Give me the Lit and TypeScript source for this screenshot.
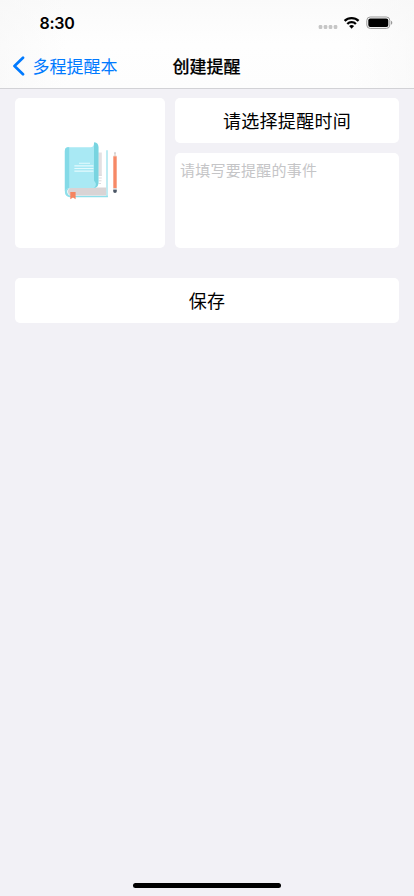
import { LitElement, html, css } from "lit";
import { customElement } from "lit/decorators.js";

@customElement("status-bar")
class StatusBar extends LitElement {
  static styles = css`
    :host {
      display: flex;
      justify-content: space-between;
      height: 44px;
      padding: 0 21px 0 39.5px;
      box-sizing: border-box;
    }
    .time {
      font: 600 16px/20px Inter, sans-serif;
      letter-spacing: -0.25px;
      margin-top: 13px;
      color: #000;
    }
    .icons {
      display: block;
      margin-top: 12px;
    }
  `;
  render() {
    return html`
      <span class="time">8:30</span>
      <svg class="icons" width="77" height="22" viewBox="316 12 77 22">
        <g fill="#c6c6c6">
          <rect x="318.7" y="25.1" width="3.6" height="3.8" rx="1.2" />
          <rect x="323.7" y="25.1" width="3.6" height="3.8" rx="1.2" />
          <rect x="328.7" y="25.1" width="3.6" height="3.8" rx="1.2" />
          <rect x="333.7" y="25.1" width="3.6" height="3.8" rx="1.2" />
        </g>
        <g fill="none" stroke="#000" stroke-width="2.3">
          <path d="M344.6 20.9a10.1 10.1 0 0 1 14 0" />
          <path d="M347.3 24a6 6 0 0 1 8.6 0" />
        </g>
        <path d="M349.1 26.1a3.6 3.6 0 0 1 5 0l-2.5 2.6z" fill="#000" />
        <rect x="366.8" y="17" width="23" height="11.4" rx="3.4" fill="none" stroke="#999" />
        <rect x="368.3" y="18.6" width="20" height="8.3" rx="1.9" fill="#000" />
        <path d="M391 20.8c1.8.7 1.8 3.3 0 4z" fill="#999" />
      </svg>
    `;
  }
}

@customElement("nav-bar")
class NavBar extends LitElement {
  static styles = css`
    :host {
      display: grid;
      grid-template-columns: 1fr auto 1fr;
      align-items: center;
      height: 44px;
      font: 17px/24px "Noto Sans CJK SC", sans-serif;
    }
    .back {
      display: flex;
      align-items: center;
      gap: 7.5px;
      padding-left: 12px;
      color: #007aff;
      white-space: nowrap;
    }
    .title {
      font-weight: 500;
      color: #000;
      -webkit-text-stroke: 0.2px #000;
      margin-right: 1px;
    }
  `;
  render() {
    return html`
      <div class="back">
        <svg width="13" height="20" viewBox="0 0 13 20">
          <path d="M11 1.8 2.5 10l8.5 8.2" fill="none" stroke="#007aff" stroke-width="2.7" stroke-linecap="round" stroke-linejoin="round" />
        </svg>
        <span>多程提醒本</span>
      </div>
      <div class="title">创建提醒</div>
    `;
  }
}

@customElement("notebook-icon")
class NotebookIcon extends LitElement {
  static styles = css`
    :host {
      display: block;
      width: 64px;
      height: 64px;
    }
    svg {
      display: block;
    }
  `;
  render() {
    return html`
      <svg width="64" height="64" viewBox="58 141 64 64">
        <path d="M98 152.5h3.8V176H98z" fill="#e3e0e2" />
        <path d="M98.5 175.2h3.3M98.5 178h3.3M98.5 180.8h3M98.5 183.5h2.5" stroke="#dcdadd" stroke-width="1" />
        <path d="M106.2 150.2h1.6V197h-1.6z" fill="#aee8f0" />
        <path d="M68.5 147.2a3.6 3.6 0 0 0-3.6 3.6v41.5a5 5 0 0 0 5 5h38v-1.6H71a4 4 0 0 1-2.5-7z" fill="#8fdfea" />
        <path d="M72 187.6h34.2v8H72a4 4 0 0 1 0-8z" fill="#d9d4d5" />
        <path d="M68.5 147.2H90c2.700 0 4-1.200 4-4.800h.5c2.600 0 3.900 1.600 3.900 4.600v35.400c0 3.600-1.700 5.600-5.200 5.600H71.400c-3.200 0-5.200 1-6.500 3v-40.200a3.600 3.600 0 0 1 3.600-3.600z" fill="#a9e9f4" />
        <path d="M94 142.400c3 0 4.400 1.700 4.400 4.700v35.300c0 3.400-1.600 5.400-4.800 5.600 1.800-1 2.400-2.500 2.200-4.500-.2-1.500-1.800-2-1.800-3.600z" fill="#78d4e0" />
        <path d="M68.500 147.200h.7v40.900c-1.900.2-3.300 1.200-4.300 2.900v-40.200a3.600 3.600 0 0 1 3.600-3.600z" fill="#84dae7" />
        <path d="M79 163.200h11M74.400 165.900h19M74.400 168.500h19M74.400 171.100h19" stroke="#e4fafd" stroke-width="1.100" />
        <path d="M70.300 192h5.300v7.300l-2.600-1.800-2.700 1.800z" fill="#f6845f" />
        <path d="m115 152 1.600 4.500h-3.200z" fill="#e6dcd5" />
        <path d="m115 151.800.6 1.700h-1.200z" fill="#8c9096" />
        <path d="M113.300 156.300h3.400v32h-3.400z" fill="#f68966" />
        <path d="M113.300 188.200h3.400v1.800h-3.400z" fill="#d5d7da" />
        <path d="M113.200 189.800h3.600v1.400a1.800 1.800 0 0 1-3.600 0z" fill="#4b5665" />
      </svg>
    `;
  }
}

@customElement("app-root")
class AppRoot extends LitElement {
  static styles = css`
    :host {
      display: flex;
      flex-direction: column;
      height: 896px;
      box-sizing: border-box;
      background: #f2f1f6;
      font-family: "Noto Sans CJK SC", sans-serif;
      color: #000;
    }
    .header {
      height: 88px;
      border-bottom: 1px solid #d2d2d6;
      background:
        linear-gradient(90deg, rgba(247, 247, 247, 0.6), transparent 16%, transparent 84%, rgba(247, 247, 247, 0.6)),
        linear-gradient(#fafafa, #fefefe 50%, #fdfdfd);
    }
    .form {
      display: grid;
      grid-template-columns: 150px 1fr;
      grid-template-rows: 45px 95px 45px;
      column-gap: 10px;
      padding: 9px 15px 0;
    }
    .card {
      background: #fff;
      border-radius: 5px;
      display: flex;
      align-items: center;
      justify-content: center;
      box-sizing: border-box;
      padding-bottom: 2px;
      font-size: 18px;
      letter-spacing: 0.3px;
    }
    .picture {
      grid-row: 1 / 3;
      height: 150px;
      padding-bottom: 0;
    }
    .event {
      margin-top: 10px;
      height: 95px;
      align-items: flex-start;
      justify-content: flex-start;
      padding: 6px 5px;
      font-size: 15px;
      line-height: 22px;
      letter-spacing: 0.25px;
      color: #c5c5c7;
    }
    .save {
      grid-column: 1 / 3;
      margin-top: 40px;
      height: 45px;
    }
    .indicator {
      width: 148px;
      height: 5px;
      border-radius: 3px;
      background: #000;
      margin: auto auto 8.5px;
    }
  `;
  render() {
    return html`
      <div class="header">
        <status-bar></status-bar>
        <nav-bar></nav-bar>
      </div>
      <div class="form">
        <div class="card picture"><notebook-icon></notebook-icon></div>
        <div class="card">请选择提醒时间</div>
        <div class="card event">请填写要提醒的事件</div>
        <div class="card save">保存</div>
      </div>
      <div class="indicator"></div>
    `;
  }
}
